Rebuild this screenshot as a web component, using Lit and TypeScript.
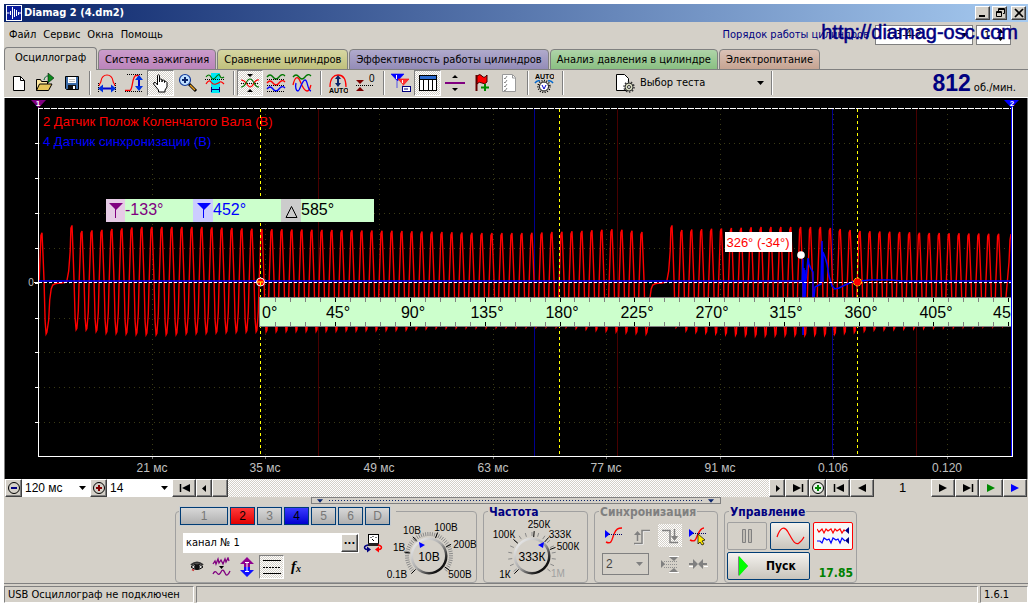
import { LitElement, html, svg, css } from "lit";
import { customElement, state } from "lit/decorators.js";

type Pt = [number, number];

const lerp = (table: Pt[], x: number): number => {
  if (x <= table[0][0]) return table[0][1];
  for (let i = 1; i < table.length; i++) {
    const [x1, y1] = table[i];
    const [x0, y0] = table[i - 1];
    if (x <= x1) return y0 + ((y1 - y0) * (x - x0)) / (x1 - x0);
  }
  return table[table.length - 1][1];
};

/* Envelope of the crankshaft signal: crest and trough height along the time axis. */
const CREST: Pt[] = [[41, 233], [71, 225], [81, 231], [100, 230], [140, 227], [200, 227], [260, 229], [400, 231], [480, 233], [530, 233], [580, 231], [615, 229], [642, 232], [671, 225], [681, 230], [760, 227], [820, 227], [860, 231], [930, 233], [1012, 234]];
const TROUGH: Pt[] = [[41, 334], [76, 329], [100, 333], [150, 335], [240, 332], [330, 331], [400, 330], [430, 328], [560, 327], [600, 331], [642, 334], [671, 327], [685, 332], [745, 336], [825, 335], [870, 330], [930, 328], [1012, 326]];
const ZERO = 282;
const TOOTH: Pt[] = [[-3.4, -0.6], [-2.6, 0], [-1.5, 0.55], [-0.8, 0.95], [0.3, 1], [1.2, 0.6], [2.4, 0], [3.4, -0.75], [4.4, -1], [5.2, -0.97]];

const crankPath = (): string => {
  const pts: string[] = [];
  const tooth = (p: number, skip = 0) => {
    for (const [dx, k] of TOOTH.slice(skip)) {
      const y = k >= 0 ? ZERO - k * (ZERO - lerp(CREST, p)) : ZERO - k * (lerp(TROUGH, p) - ZERO);
      pts.push(`${(p + dx).toFixed(1)},${y.toFixed(1)}`);
    }
  };
  const rest = (p: number) =>
    [[7, 320], [8, 300], [9.5, 289], [11, 285], [14, 283.5], [20, 283], [25, 282], [27, 271]].forEach(([dx, y]) => pts.push(`${p + dx},${y}`));
  tooth(41.7, 1);
  rest(41.7);
  for (let i = 0; i < 58; i++) tooth(71.7 + i * 10, i === 0 ? 2 : 0);
  rest(641.7);
  for (let i = 0; i < 34; i++) tooth(671.7 + i * 9.9, i === 0 ? 2 : 0);
  pts.push("1009,262", "1010,240", "1011,234");
  return pts.join(" ");
};

const SYNC_PATH =
  "39,281 802,281 803,259 803,335 804,268 804,298 805,270 805,298 806,276 806,280 808,258 809,264 811,269 813,272 813,298 814,298 815,287 819,285 821,284 822,241 823,282 823,252 825,257 827,264 829,276 832,286 835,289 839,288 845,285 852,282 860,281 870,280 890,280 902,281 1011,281";

const TIMES: [number, string][] = [[152, "21 мс"], [265, "35 мс"], [379, "49 мс"], [493, "63 мс"], [606, "77 мс"], [720, "91 мс"], [833, "0.106"], [947, "0.120"]];

const ic = (body: unknown, w = 20, h = 20) =>
  html`<svg class="ic" width=${w} height=${h} viewBox="0 0 ${w} ${h}" fill="none" stroke="none" aria-hidden="true">${body}</svg>`;

const icons = {
  logo: ic(svg`<rect width="16" height="16" fill="#fff"/><rect x="1" y="1" width="14" height="14" fill="#0a1c9c"/><path d="M1 8h2.500M4.500 6v4M6.500 2v12M8.500 4v8M10.500 5v6M12.500 7v3M13 8h2" stroke="#fff"/>`, 16, 16),
  file: ic(svg`<path d="M4.500 3.500h7l4 4v10h-11z" fill="#fff" stroke="#000"/><path d="M11.500 3.500v4h4" stroke="#000"/>`),
  open: ic(svg`<path d="M1.500 17.500v-11h4l1 2h6v3" fill="#ffe9a0" stroke="#000"/><path d="M1.500 17.500l3-6.500h12.500l-3.500 6.500z" fill="#e6c65a" stroke="#000"/><path d="M9 7c1-4 3-4 4-4" stroke="#063"/><path d="M13 0l6 5-6 5z" fill="#0a8a1c" stroke="#000" stroke-width=".5"/>`),
  save: ic(svg`<path d="M4.500 3.500h13v13h-12l-1-1z" fill="#3c6ca8" stroke="#000"/><path d="M7 4h8v6H7z" fill="#fff"/><path d="M7 12h8v4H7z" fill="#111"/><path d="M12 13h2v3h-2z" fill="#fff"/><path d="M8 6.500h6M8 8.500h6" stroke="#bbb"/>`),
  width: ic(svg`<path d="M2 13C2 11 4 10 4 8Q5 2 10 2t6 6c0 2 2 3 2 5" stroke="red" stroke-width="1.200"/><path d="M1.500 10v9M18.500 10v9" stroke="#000" stroke-dasharray="1 1"/><path d="M4 15.500h12" stroke="#00c" stroke-width="2"/><path d="M1 15.500l5-4v8zM19 15.500l-5-4v8z" fill="#0030e0"/>`),
  height: ic(svg`<path d="M1 17.500h5C9 16 8 3 12 2.500h3" stroke="red" stroke-width="1.300"/><path d="M3 1.500h16M1 18.500h18" stroke="#000" stroke-dasharray="1 1"/><path d="M15 5v11" stroke="#00c" stroke-width="2"/><path d="M15 2l4 5h-8zM15 18l4-5h-8z" fill="#0030e0"/>`),
  hand: ic(svg`<path d="M6.500 12V2.500q1-1.500 2 0V9V6.500q1-1 2.500 0V9V7.500q1-1 2.500 0V9.500V8.500q1.500-1 2.500 1V14l-2 3v2H7.500v-2L2.500 11q0-2 2-1.500z" fill="#fff" stroke="#000"/>`),
  zoom: ic(svg`<path d="M11 11l7 7" stroke="#000" stroke-width="3"/><path d="M12 12l5 5" stroke="#e8a020" stroke-width="1.500"/><circle cx="7" cy="7" r="5.500" fill="#bfe0ff" stroke="#123a9a" stroke-width="1.200"/><path d="M4 7h6M7 4v6" stroke="#0a246a" stroke-width="2"/>`),
  region: ic(svg`<path d="M6 0h9v20H6z" fill="#00e8f4"/><path d="M1 4q3-4 5 0t5 0 4-1 4 1" stroke="#070" stroke-width="1.200"/><path d="M0 6.500h20" stroke="#000" stroke-dasharray="1 1"/><path d="M1 11q3-5 5-2t5 2 4-2 4 2" stroke="red" stroke-width="1.200"/><path d="M6.500 14v5M14.500 14v5M7 16.500h8" stroke="#000080"/>`),
  overlay: ic(svg`<path d="M1 10.500h18" stroke="#000" stroke-dasharray="1 1"/><path d="M1 7q3 0 5 3t4 4q2 0 4-4t5-3" stroke="red" stroke-width="1.200"/><path d="M1 14q3 0 5-4t4-4q2 0 4 4t5 4" stroke="#070" stroke-width="1.200"/><path d="M7 1h6l-3 3zM7 19h6l-3-3z" fill="#000"/>`),
  stack: ic(svg`<path d="M1 4q3-4 6 0t6 0 6-1" stroke="#070" stroke-width="1.300"/><path d="M1 10q3-4 6 0t6 0 6-1" stroke="red" stroke-width="1.300"/><path d="M1 16q3-4 6 0t6 0 6-1" stroke="#00f" stroke-width="1.300"/><path d="M1 6.500h18M1 12.500h18M1 18.500h18" stroke="#000" stroke-dasharray="1 1"/>`),
  merge: ic(svg`<path d="M1 4q3-4 6 0t6 0 6-1" stroke="#070" stroke-width="1.300"/><path d="M1 12C3 3 6 3 8 8s4 10 7 10 3-4 4-6" stroke="red" stroke-width="1.300"/><path d="M4 10c-1 4 0 8 2 8s4-11 7-11 2 10 6 11" stroke="#00f" stroke-width="1.300"/>`),
  auto: ic(svg`<path d="M2 14C2 5 6 2 10 2s8 3 8 12" stroke="red" stroke-width="1.300"/><path d="M10 4v8" stroke="#0a246a" stroke-width="2"/><path d="M10 2l3 4H7zM10 14l3-4H7z" fill="#0a246a"/><text x="1" y="20" font-size="7" font-weight="700" fill="#000" class="tiny">AUTO</text>`),
  zero: ic(svg`<path d="M1 12.500h18" stroke="#000" stroke-dasharray="1 1"/><path d="M1 7h8l-4 4zM1 18h8l-4-4z" fill="#800000"/><text x="14" y="9" font-size="10" fill="#000" class="tiny">0</text>`),
  markers: ic(svg`<path d="M0 1h13L6.500 8zM6 8v7" fill="#00f" stroke="#00f" stroke-width=".6"/><path d="M7 6h11l-5.500 6zM12 12v6" fill="#f33" stroke="red" stroke-width=".6"/><path d="M5.500 2v4" stroke="#fff"/><path d="M11.500 7v3" stroke="#fff"/><rect x="11.500" y="13.500" width="8" height="5" fill="#fff" stroke="#000080"/><path d="M13 16h4" stroke="#000080"/>`),
  table: ic(svg`<rect x="1.500" y="2.500" width="17" height="15" fill="#fff" stroke="#000"/><path d="M2 3h16v3H2z" fill="#2a6ad0"/><path d="M2 6.500h16M5.500 6v11M10.500 6v11M14.500 6v11" stroke="#000"/>`),
  split: ic(svg`<path d="M0 10h20" stroke="#800080" stroke-width="2"/><path d="M7 5h6l-3-3zM7 15h6l-3 3z" fill="#000"/>`),
  flag: ic(svg`<path d="M4.500 2v16" stroke="#600" stroke-width="2"/><path d="M5 3q3-3 5 0t5-1v7q-2 3-5 1t-5 1z" fill="red" stroke="#400"/><path d="M13 11v7M9 14.500h8" stroke="#080" stroke-width="2"/>`),
  list: ic(svg`<path d="M3.500 1.500h10l3 3v14h-13z" fill="#fff" stroke="#999"/><path d="M5 5l1 1 2-3M5 9l1 1 2-3M5 13l1 1 2-3M5 17l1 1 2-3" stroke="#888"/><path d="M13.500 2v3h3" stroke="#999"/>`),
  autoDial: ic(svg`<text x="1" y="6" font-size="7" font-weight="700" fill="#000" class="tiny">AUTO</text><path d="M1 10q2-3 5-2M19 10q-2-3-5-2" stroke="#06c" stroke-width="1.500"/><circle cx="10" cy="13.500" r="6" stroke="#000" stroke-dasharray="1 1.500" stroke-width="1.500"/><circle cx="10" cy="13.500" r="4.500" fill="#fff" stroke="#000"/><path d="M8 12l2 4 2-4" stroke="#00c"/>`),
  test: ic(svg`<path d="M1.500 1.500h8l4 4v12h-12z" fill="#fff" stroke="#000"/><circle cx="14" cy="14" r="4" fill="#d8dcc0" stroke="#333"/><circle cx="14" cy="14" r="5" stroke="#333" stroke-width="1.500" stroke-dasharray="1.500 1.600"/><circle cx="14" cy="14" r="1.500" fill="#fff" stroke="#333"/>`),
  probe: ic(svg`<rect x="5.500" y="1.500" width="10" height="9" fill="#fff" stroke="#000"/><path d="M8 4v1M10 3v1M13 4v1M9 6l2 2" stroke="#000"/><path d="M5 10h11v3H5z" fill="#222"/><path d="M5 12c-5 1-4 4-1 4.500" stroke="#000080" stroke-width="1.400"/><path d="M15 12c5 1 4 4 1 4.500" stroke="red" stroke-width="1.400"/><path d="M4 13.500l4 3-4 3z" fill="#000080"/><path d="M16 13.500l-4 3 4 3z" fill="red"/>`),
  eye: ic(svg`<path d="M4 10q6-6 12 0-6 5-12 0z" fill="#ddd" stroke="#000"/><circle cx="10" cy="10" r="2.800" fill="#111"/><path d="M4 8q6-5 12 0" stroke="#333" stroke-width="2"/><path d="M5 12.500l2 1" stroke="#c33" stroke-width="1.500"/>`),
  noise: ic(svg`<path d="M1 7l2-3 1 3 2-5 1 4 2-3 2 4 2-5 1 3 2-4 1 3" stroke="#800080" stroke-width="1.300"/><path d="M7 9h5l-2.500 3z" fill="#000"/><path d="M1 17q2-4 4-1t4-1 4 1 5-2" stroke="#800080" stroke-width="1.300"/>`),
  shift: ic(svg`<path d="M10 0l7 7h-4v3H7V7H3z" fill="#900090"/><path d="M10 20l7-7h-4v-3H7v3H3z" fill="#1010ff"/><path d="M10 5v10M8 5.500h4M8 14.500h4" stroke="#fff"/>`),
  lines: ic(svg`<path d="M1 3.500h18M1 16.500h18" stroke="#000"/><path d="M1 10.500h18" stroke="#000" stroke-dasharray="2 1"/>`),
  fx: ic(svg`<text x="4" y="14" font-size="15" font-weight="700" font-style="italic" fill="#000" class="serif">f</text><text x="9" y="15" font-size="10" font-weight="700" font-style="italic" fill="#000" class="serif">x</text>`),
  trigger: ic(svg`<path d="M2 16c6 3 6-3 8-8s4-6 8-6" stroke="red" stroke-width="1.400"/><path d="M1 4l5 4-5 4z" fill="#00f"/><path d="M5 8.500h14" stroke="#006" stroke-dasharray="1 1"/>`),
  rise: ic(svg`<path d="M2 17.500h8v-13h7" stroke="#fff" transform="translate(1 1)"/><path d="M2 17.500h8v-13h8" stroke="#808080" stroke-width="1.500"/><path d="M5.500 7v8" stroke="#808080" stroke-width="1.500"/><path d="M2 9l3.500-4L9 9z" fill="#808080"/>`),
  fall: ic(svg`<path d="M2 4.500h8v12h8" stroke="#808080" stroke-width="1.500"/><path d="M14.500 3v10" stroke="#808080" stroke-width="1.500"/><path d="M11 10l3.500 5 3.500-5z" fill="#808080"/>`),
  pick: ic(svg`<path d="M2 14c6 3 6-2 8-6s4-6 6-6" stroke="red" stroke-width="1.400"/><path d="M1 3l5 4-5 4z" fill="#00f"/><path d="M5 7.500h14" stroke="#006" stroke-dasharray="1 1"/><path d="M10 8l7 6-3 1 2 3-2 1-2-3-2 2z" fill="#ffe800" stroke="#000" stroke-width=".7"/>`),
  level: ic(svg`<path d="M1 6l4 4-4 4z" fill="#808080"/><path d="M4 7.500h13M4 10.500h13M4 13.500h13" stroke="#909090" stroke-dasharray="1 1"/><path d="M9 3h9l-4 4zM9 18h9l-4-4z" fill="#808080"/><path d="M9 2.500h10M9 18.500h10" stroke="#fff"/>`),
  squeeze: ic(svg`<path d="M1 10h6M19 10h-6" stroke="#808080" stroke-width="2"/><path d="M5 5l5 5-5 5zM15 5l-5 5 5 5z" fill="#808080"/><path d="M1 12.500h4M16 12.500h4" stroke="#fff"/>`),
  pause: ic(svg`<path d="M5.500 3.500h3v13h-3zM11.500 3.500h3v13h-3z" fill="#c0bcb4" stroke="#808080"/>`),
  sine: ic(svg`<path d="M1 11C4 2 8-1 12 6s7 14 11 11 4-5 5-6" stroke="red" stroke-width="1.200"/>`, 29, 20),
  dual: ic(svg`<path d="M0 3l2 3 3-3 2 4 2-4 2 2 3-2 2 4 2-4 2 2 3-2 2 4 2-3 1 1" stroke="red" stroke-width="1.200"/><path d="M0 15h3l2 2 2-5 3 2 2-1 2 4 2-5 3 2 2-1 2 4 2-5 3 3" stroke="#00f" stroke-width="1.200"/><path d="M32 1v7l-4-3.500zM32 11v7l-4-3.500z" fill="#000080"/>`, 32, 20),
  play: ic(svg`<path d="M1 0v20l10-10z" fill="#808080"/><path d="M2 0v20l9-10z" fill="#0f0"/>`, 12, 20),
  minus: ic(svg`<circle cx="8" cy="8" r="5.500" stroke="#000"/><path d="M5 8h6" stroke="#000080" stroke-width="2"/>`, 16, 16),
  plus: ic(svg`<circle cx="8" cy="8" r="5.500" stroke="#000"/><path d="M5 8h6M8 5v6" stroke="#800000" stroke-width="2"/>`, 16, 16),
  plusGreen: ic(svg`<circle cx="8" cy="8" r="5.500" stroke="#000" fill="#e8f0e8"/><path d="M5 8h6M8 5v6" stroke="#080" stroke-width="2"/>`, 16, 16),
  first: ic(svg`<path d="M3.500 2v8" stroke="#000" stroke-width="1.500"/><path d="M13 2v8L5 6z" fill="#000"/>`, 14, 12),
  last: ic(svg`<path d="M12.500 2v8" stroke="#000" stroke-width="1.500"/><path d="M3 2v8l8-4z" fill="#000"/>`, 14, 12),
  back: ic(svg`<path d="M11 2v8L3 6z" fill="#000"/>`, 14, 12),
  fwd: ic(svg`<path d="M3 2v8l8-4z" fill="#000"/>`, 14, 12),
  fwdGreen: ic(svg`<path d="M3 2v8l8-4z" fill="#080"/>`, 14, 12),
  fwdBlue: ic(svg`<path d="M3 2v8l8-4z" fill="#00f"/>`, 14, 12),
  sbLeft: ic(svg`<path d="M5 1v7L1 4.500z" fill="#000"/>`, 7, 9),
  sbRight: ic(svg`<path d="M2 1v7l4-3.500z" fill="#000"/>`, 7, 9),
  min: ic(svg`<path d="M2 8h6" stroke="#000" stroke-width="2"/>`, 12, 10),
  restore: ic(svg`<path d="M4.500 3V.5h6v5H9M4 1.500h7M2.500 3.500h5v5h-5zM2 4.500h6" stroke="#000"/>`, 12, 10),
  close: ic(svg`<path d="M2 1l8 8M10 1L2 9" stroke="#000" stroke-width="1.700"/>`, 12, 10),
};

const caret = html`<svg class="caret" width="7" height="4" viewBox="0 0 7 4" aria-hidden="true"><path d="M0 0h7L3.500 4z" fill="currentColor"/></svg>`;
const updown = html`<svg class="caret" width="7" height="14" viewBox="0 0 7 14" aria-hidden="true"><path d="M0 5h7L3.500 1zM0 9h7l-3.500 4z" fill="currentColor"/></svg>`;

const combo = (cls: string, label: string, options: string[]) =>
  html`<span class="combo ${cls}"><select aria-label=${label}>${options.map((o) => html`<option>${o}</option>`)}</select>${caret}</span>`;

@customElement("scope-chart")
export class ScopeChart extends LitElement {
  static styles = css`
    :host { display: block; background: #000; }
    .plot { display: block; width: 100%; font-family: "Liberation Sans", Arial, sans-serif; }
    .crisp { shape-rendering: crispEdges; }
    .grid { stroke: #3a3a14; stroke-dasharray: 1 4; }
    .name { font-size: 13px; }
    .time { font-size: 12px; fill: #c0c0c0; text-anchor: middle; }
    .zero { font-size: 10px; }
    .deg { font-size: 16px; fill: #000; }
    .first { fill: #800080; }
    .second { fill: #00f; }
    .mid { text-anchor: middle; }
    .tip { font-size: 13px; fill: #f00; text-anchor: middle; }
    .tag { font-size: 8px; font-weight: 700; fill: #fff; text-anchor: middle; }
  `;

  render() {
    const rows = Array.from({ length: 9 }, (_, i) => Math.round(143 + i * 34.9));
    const step = 14.95;
    const ticks = Array.from({ length: 50 }, (_, i) => i + 1);
    return html`<svg class="plot" viewBox="5 98 1022 381" role="img" aria-label="Осциллограмма">
      <g class="crisp" fill="none">
        ${rows.map((y) => svg`<path class="grid" d="M39 ${y}.500H1011"/>`)}
        ${TIMES.map(([x]) => svg`<path class="grid" d="M${x}.500 109V456"/>`)}
        ${[318, 617, 916].map((x) => svg`<path d="M${x}.500 109V456" stroke="#480000"/>`)}
        ${[534, 832].map((x) => svg`<path d="M${x}.500 109V456" stroke="#000090"/>`)}
        <path d="M38 282.500h-4M38 108.500H1012" stroke="#fff" />
        <path d="M43 108.500H1012" stroke="#000" stroke-dasharray="1 6" />
      </g>
      <text class="name" x="43" y="126" fill="#f00">2 Датчик Полож Коленчатого Вала (В)</text>
      <text class="name" x="43" y="146" fill="#00f">4 Датчик синхронизации (В)</text>
      <polyline points=${crankPath()} fill="none" stroke="#f00" stroke-width="1.400" />
      <polyline points=${SYNC_PATH} fill="none" stroke="#00f" stroke-width="1.500" />
      <g class="crisp" fill="none">
        <path d="M39 282.500H1011" stroke="#fff" stroke-dasharray="3 2" />
        ${[260, 559, 857].map((x) => svg`<path d="M${x}.500 109V456" stroke="#ff0" stroke-dasharray="3 3"/>`)}
        <path d="M38.500 100V457M38 456.500H1013M1012.500 100V456" stroke="#fff" />
        <path d="M1011.500 100V456" stroke="#00f" />
        ${rows.map((y) => svg`<path d="M35 ${y}.500h3" stroke="#fff"/>`)}
        ${TIMES.map(([x]) => svg`<path d="M${x}.500 457v2" stroke="#777"/>`)}
      </g>
      <circle cx="260.500" cy="282" r="4" fill="#f00" stroke="#fff" />
      <path d="M257 282h6M260.500 282v4" stroke="#ff0" />
      <circle cx="857.500" cy="282" r="4" fill="#f00" stroke="#ff0" stroke-dasharray="2 1" />
      <path d="M31 100h15l-7.500 8z" fill="#800080" />
      <path d="M1004 100h15l-7.500 8z" fill="#00f" />
      <text class="tag" x="38" y="106">1</text>
      <text class="tag" x="1012" y="106">2</text>
      <text class="time zero" x="31" y="286">0</text>
      ${TIMES.map(([x, t]) => svg`<text class="time" x=${x} y="472">${t}</text>`)}

      <g class="crisp">
        <rect x="106" y="199" width="268" height="23" fill="#cfc" />
        <rect x="106" y="199" width="19" height="23" fill="#e6cce6" />
        <rect x="193" y="199" width="20" height="23" fill="#ccf" />
        <rect x="281" y="199" width="20" height="23" fill="#ccc" />
      </g>
      <path d="M109 203h14l-7 7zM115 209h1v9h-1z" fill="#800080" />
      <path d="M197 203h14l-7 7zM203 209h1v9h-1z" fill="#00f" />
      <path d="M286 217.500h11l-5.500-11z" fill="none" stroke="#000" />
      <text class="deg first" x="125" y="215">-133°</text>
      <text class="deg second" x="213" y="215">452°</text>
      <text class="deg" x="301" y="215">585°</text>

      <g class="crisp">
        <rect x="259" y="297" width="752" height="30" fill="#808080" />
        <rect x="260" y="298" width="751" height="28" fill="#cfc" />
        ${ticks.map((i) => {
          const x = Math.round(260.5 + i * step);
          return svg`<path d="M${x}.500 298v4M${x}.500 322v4" stroke=${i % 5 ? "#808080" : "#000"}/>`;
        })}
      </g>
      <text class="deg" x="262" y="318">0°</text>
      ${Array.from({ length: 9 }, (_, i) => i + 1).map(
        (i) => svg`<text class="deg mid" x=${Math.round(263 + i * 5 * step)} y="318">${i * 45}°</text>`
      )}
      <text class="deg" x="993" y="318">45</text>

      <rect class="crisp" x="725" y="232" width="67" height="20" fill="#fff" />
      <text class="tip" x="758" y="247">326° (-34°)</text>
      <circle cx="801" cy="255" r="3.800" fill="#fff" />
    </svg>`;
  }
}

@customElement("range-dial")
export class RangeDial extends LitElement {
  static properties = { kind: {} };
  kind = "volt";

  static styles = css`
    :host { display: block; }
    .dial { display: block; font-family: "Liberation Sans", Arial, sans-serif; }
    .lab { font-size: 10px; fill: #000; text-anchor: middle; }
    .off { fill: #a0a0a0; }
    .val { font-size: 12px; fill: #000; text-anchor: middle; }
  `;

  render() {
    const volt = this.kind === "volt";
    const cx = volt ? 42 : 48;
    const cy = 41;
    const labels: [number, number, string][] = volt
      ? [[10, 63, "0.1В"], [12, 36, "1В"], [25, 19, "10В"], [59, 16, "100В"], [78, 33, "200В"], [73, 63, "500В"]]
      : [[21, 63, "1К"], [20, 23, "100К"], [55, 13, "250К"], [76, 23, "333К"], [84, 35, "500К"], [74, 62, "1М"]];
    const major = volt ? [-135, -81, -40, 20, 62, 125] : [-135, -48, 5, 42, 70];
    const count = volt ? 45 : 16;
    const ray = (deg: number, r0: number, r1: number, color: string) => {
      const a = (deg * Math.PI) / 180;
      const s = Math.sin(a);
      const c = Math.cos(a);
      return svg`<path d="M${(cx + r0 * s).toFixed(1)} ${(cy - r0 * c).toFixed(1)}L${(cx + r1 * s).toFixed(1)} ${(cy - r1 * c).toFixed(1)}" stroke=${color}/>`;
    };
    return html`<svg class="dial" width="97" height="68" viewBox="0 0 97 68" role="img" aria-label=${volt ? "10В" : "333К"}>
      <defs><linearGradient id="rim" x1="0" y1="0" x2="1" y2="1">
        <stop offset="0" stop-color="#fff"/><stop offset=".5" stop-color="#a8a8a8"/><stop offset=".8" stop-color="#111"/>
      </linearGradient></defs>
      ${Array.from({ length: count + 1 }, (_, i) => ray(-130 + (i * 260) / count, 20, 24, "#8a8a8a"))}
      ${major.map((d) => ray(d, 19, 25, "#000"))}
      <circle cx=${cx} cy=${cy} r="18.500" fill="url(#rim)"/>
      <circle cx=${cx} cy=${cy} r="16" fill="#d4d0c8"/>
      <path d=${volt ? "M32 27l6 3-5 3z" : "M60 27l-1 6-5-3z"} fill="#00f"/>
      ${labels.map(([x, y, t]) => svg`<text class="lab ${t === "1М" ? "off" : ""}" x=${x} y=${y}>${t}</text>`)}
      <text class="val" x=${cx} y="46">${volt ? "10В" : "333К"}</text>
    </svg>`;
  }
}

@customElement("app-root")
export class AppRoot extends LitElement {
  @state() private tab = 0;

  static styles = css`
    :host {
      display: block; box-sizing: border-box; min-height: 100vh; padding: 4px 4px 5px; background: #fff; color: #000;
      font: 11px/14px "DejaVu Sans Condensed", "DejaVu Sans", sans-serif;
      --face: #d4d0c8; --dither: repeating-conic-gradient(#fff 0 25%, #d4d0c8 0 50%) 0 0 / 2px 2px;
    }
    *, *::before { box-sizing: border-box; }
    button, select, input { font: inherit; color: inherit; margin: 0; padding: 0; border: 0; border-radius: 0; background: none; }
    button { display: flex; align-items: center; justify-content: center; }
    .ic { display: block; flex: none; }
    .tiny { font-family: "Liberation Sans", sans-serif; }
    .serif { font-family: "Liberation Serif", serif; }
    .window { background: var(--face); position: relative; }

    .title { display: flex; align-items: center; height: 18px; padding: 0 2px; gap: 2px; background: linear-gradient(90deg, #0a246a, #a6caf0); }
    .title h1 { flex: 1; margin: 0; font-size: 11px; font-weight: 700; color: #fff; }
    .raised { background: var(--face); border: 1px solid; border-color: #fff #404040 #404040 #fff; box-shadow: inset -1px -1px #808080; }
    .sys { width: 15px; height: 14px; }
    .sys.x { margin-left: 2px; }

    .menu { display: flex; align-items: center; height: 26px; padding: 0 17px 0 5px; }
    .menu a { color: #000; text-decoration: none; margin-right: 7px; }
    .order { display: flex; align-items: center; gap: 3px; margin-left: auto; color: #000080; }
    .combo { display: inline-grid; align-items: center; background: #fff; color: #000; }
    .combo select, .combo input { grid-area: 1 / 1; appearance: none; width: 100%; height: 100%; padding-left: 3px; outline: 0; }
    .caret { grid-area: 1 / 1; justify-self: end; margin-right: 4px; pointer-events: none; }
    .cyl { width: 98px; height: 20px; border: 1px solid #808080; margin-left: 3px; }
    .cyl select { padding-left: 10px; }
    .spin { width: 35px; height: 20px; border: 1px solid #808080; }
    .spin input { padding-left: 7px; }
    .spin .caret { margin-right: 6px; }
    .site { position: absolute; right: 10px; top: 17px; font: 20px/22px "Liberation Sans", Arial, sans-serif; color: #000080; text-decoration: none; -webkit-text-stroke: 0.5px #000080; }

    .tabs { display: flex; align-items: flex-end; height: 22px; gap: 1px; background: linear-gradient(#808080, #808080) 0 100% / 100% 1px no-repeat; }
    .tab { height: 21px; padding: 0 6px; border: 1px solid #808080; border-radius: 4px 4px 0 0; white-space: nowrap; }
    .tab.on { height: 23px; padding: 0 10px 3px; border-bottom: 0; background: var(--face); }
    .t1 { background: linear-gradient(#cb9ccb, #bb84bb); }
    .t2 { background: linear-gradient(#d6d6a2, #c0c07c); }
    .t3 { background: linear-gradient(#b0aacc, #948cb8); }
    .t4 { background: linear-gradient(#aed4a8, #8abf82); }
    .t5 { background: linear-gradient(#dac2b6, #c6a492); }

    .tools { display: flex; align-items: center; height: 28px; padding: 0 12px 2px 2px; border-bottom: 1px solid #fff; }
    .tool { width: 26px; height: 26px; }
    .wide .tool { width: 27px; }
    .set { display: flex; }
    .pressed { background: var(--dither); border: 1px solid; border-color: #808080 #fff #fff #808080; }
    .sep { flex: none; width: 2px; height: 24px; margin: 0 2px 0 5px; border-left: 1px solid #808080; border-right: 1px solid #fff; }
    .test { display: flex; align-items: center; gap: 2px; margin-left: 49px; }
    .test .combo { width: 127px; height: 22px; background: none; }
    .test .caret { margin-right: 0; }
    .rpm { margin-left: auto; display: flex; align-items: baseline; gap: 3px; }
    .rpm b { font: 700 23px/24px "Liberation Sans", Arial, sans-serif; color: #000080; }

    .screen { border-left: 1px solid #808080; border-right: 1px solid #808080; }

    .nav { display: flex; height: 18px; padding: 0 1px; }
    .sq { width: 17px; } .arrow { width: 24px; } .sb { width: 16px; }
    .span { width: 68px; } .frame { width: 65px; }
    .nav .combo { font: 12px/16px "Liberation Sans", Arial, sans-serif; }
    .track { flex: 1; background: var(--dither); }
    .page { width: 57px; text-align: center; font: 13px/18px "Liberation Sans", Arial, sans-serif; }
    .splitter { display: flex; align-items: center; gap: 6px; width: 40%; height: 7px; margin: 0 auto; padding: 0 6px 0 5px; border: 1px solid #808080; color: #0a246a; }
    .splitter .caret { margin: 0; width: 6px; }
    .dots { flex: 1; height: 1px; background: repeating-linear-gradient(90deg, #0a246a 0 1px, transparent 1px 3px); }

    .bottom { display: flex; align-items: flex-start; gap: 6px; height: 80px; padding: 7px 0 0 171px; border-bottom: 1px solid #808080; }
    .group { height: 72px; border: 1px solid #a0a0a0; border-radius: 4px; }
    .group h2 { width: fit-content; margin: -7px 0 0 4px; padding: 0 1px; font-size: 12px; line-height: 14px; font-weight: 700; background: var(--face); color: #000080; }
    .channels { width: 302px; display: grid; grid-template-columns: 211px 1fr; }
    .chan { display: flex; gap: 2px; width: fit-content; margin: -5px 0 0 4px; padding-right: 6px; background: var(--face); }
    .ch { width: 25px; height: 18px; border: 1px solid #003c74; background: linear-gradient(#d8d8d8, #b0b0b0); color: #777; font: 12px/14px "Liberation Sans", Arial, sans-serif; box-shadow: 0 0 0 1px #c8ccd0; }
    .ch.first { width: 48px; }
    .ch.red { background: linear-gradient(#ff3a3a, #e00000); color: #000; }
    .ch.blue { background: linear-gradient(#3a3aff, #0000d0); color: #000; }
    .left { width: 212px; }
    .named { display: flex; align-items: center; gap: 4px; margin: 8px 0 0 7px; }
    .namebox { display: flex; width: 176px; height: 20px; padding: 1px; background: #fff; }
    .namebox input { flex: 1; min-width: 0; padding-left: 2px; outline: 0; }
    .dotbtn { width: 17px; font-weight: 700; line-height: 8px; padding-bottom: 4px; }
    .opts { display: flex; margin: 2px 0 0 8px; }
    .opts .tool { width: 25px; height: 24px; }
    .dialbox { margin-top: 3px; }
    .freq { width: 105px; } .freq range-dial { margin-top: -4px; }
    .sync { width: 124px; }
    .sync h2 { color: #808080; }
    .syncgrid { display: grid; grid-template-columns: repeat(4, 1fr); justify-items: center; align-items: center; margin: 5px 5px 0; row-gap: 5px; }
    .syncgrid .tool { width: 24px; height: 23px; }
    .src { grid-column: span 2; width: 47px; height: 22px; border: 1px solid #808080; background: var(--face); color: #444; justify-self: start; margin-left: 2px; font: 12px/14px "Liberation Sans", Arial, sans-serif; }
    .src .caret { color: #808080; margin-right: 5px; }
    .pressed.flat { border-color: transparent; }
    .control { width: 133px; }
    .ctlgrid { display: grid; grid-template-columns: repeat(3, 40px); gap: 2px 3px; margin: 3px 2px 0; }
    .ctl { height: 28px; border: 1px solid #003c74; border-radius: 2px; background: linear-gradient(#f4f2ee, #c8c4bc); }
    .ctl.off { border-color: #a0a0a0; background: var(--face); }
    .ctl.hot { border: 1px solid #f00; background: #f8f8f8; }
    .start { grid-column: span 2; justify-content: flex-start; padding-left: 9px; gap: 17px; font-size: 12px; font-weight: 700; }
    .volts { align-self: end; justify-self: end; color: #008000; font-size: 12px; font-weight: 700; }

    .status { display: flex; gap: 2px; height: 19px; padding-top: 2px; }
    .cell { border: 1px solid; border-color: #808080 #fff #fff #808080; padding: 1px 0 0 3px; line-height: 14px; white-space: nowrap; }
    .c1 { width: 190px; } .c2 { flex: 1; } .c3 { width: 48px; }
  `;

  private tool(name: keyof typeof icons, label: string, cls = "") {
    return html`<button type="button" class="tool ${cls}" aria-label=${label}>${icons[name]}</button>`;
  }
  private nav(name: keyof typeof icons, label: string, cls: string) {
    return html`<button type="button" class="raised ${cls}" aria-label=${label}>${icons[name]}</button>`;
  }

  render() {
    const tabs = ["Осциллограф", "Система зажигания", "Сравнение цилиндров", "Эффективность работы цилиндров", "Анализ давления в цилиндре", "Электропитание"];
    const channels = ["1", "2", "3", "4", "5", "6", "D"];
    const chCls = ["first", "red", "", "blue", "", "", ""];
    return html`<main class="window">
      <header class="title">
        ${icons.logo}
        <h1>Diamag 2 (4.dm2)</h1>
        <button type="button" class="sys raised" aria-label="Свернуть">${icons.min}</button>
        <button type="button" class="sys raised" aria-label="Восстановить">${icons.restore}</button>
        <button type="button" class="sys x raised" aria-label="Закрыть">${icons.close}</button>
      </header>
      <nav class="menu">
        ${["Файл", "Сервис", "Окна", "Помощь"].map((m) => html`<a href="#">${m}</a>`)}
        <div class="order">
          <label for="order">Порядок работы цилиндров</label>
          <span class="combo cyl"><select id="order"><option>1-3-4-2</option></select>${caret}</span>
          <span class="combo spin"><input aria-label="Цилиндр" value="1" />${updown}</span>
        </div>
      </nav>
      <a class="site" href="http://diamag-osc.com">http://diamag-osc.com</a>
      <div class="tabs" role="tablist">
        ${tabs.map((t, i) => html`<button type="button" role="tab" aria-selected=${i === this.tab} class="tab t${i} ${i === this.tab ? "on" : ""}" @click=${() => (this.tab = i)}>${t}</button>`)}
      </div>
      <div class="tools">
        <div class="set">${this.tool("file", "Новый")}${this.tool("open", "Открыть")}${this.tool("save", "Сохранить")}</div>
        <i class="sep"></i>
        <div class="set wide">${this.tool("width", "По ширине")}${this.tool("height", "По высоте")}${this.tool("hand", "Рука", "pressed")}${this.tool("zoom", "Увеличить")}${this.tool("region", "Область")}</div>
        <i class="sep"></i>
        <div class="set">${this.tool("overlay", "Наложить", "pressed")}${this.tool("stack", "Разнести")}${this.tool("merge", "Совместить")}</div>
        <i class="sep"></i>
        <div class="set wide">${this.tool("auto", "Авто")}${this.tool("zero", "Ноль")}</div>
        <i class="sep"></i>
        <div class="set wide">${this.tool("markers", "Маркеры")}${this.tool("table", "Таблица", "pressed")}${this.tool("split", "Разделить")}${this.tool("flag", "Флаг")}${this.tool("list", "Список")}</div>
        <i class="sep"></i>
        <div class="set">${this.tool("autoDial", "Автодиапазон")}</div>
        <i class="sep"></i>
        <div class="test">${icons.test}${combo("", "Тест", ["Выбор теста"])}<i class="sep"></i></div>
        <div class="rpm"><b>812</b><span>об./мин.</span></div>
      </div>
      <div class="screen"><scope-chart></scope-chart></div>
      <div class="nav">
        ${this.nav("minus", "Сжать", "sq")}${combo("span", "Развёртка", ["120 мс"])}
        ${this.nav("plus", "Растянуть", "sq")}${combo("frame", "Кадр", ["14"])}
        ${this.nav("first", "В начало", "arrow")}${this.nav("sbLeft", "Влево", "sb")}
        <span class="raised sb"></span><div class="track"></div>
        ${this.nav("sbRight", "Вправо", "sb")}${this.nav("last", "В конец", "arrow")}${this.nav("plusGreen", "Добавить", "sq")}
        ${this.nav("first", "Первый", "arrow")}${this.nav("back", "Назад", "arrow")}
        <span class="page">1</span>
        ${this.nav("fwd", "Вперёд", "arrow")}${this.nav("last", "Последний", "arrow")}${this.nav("fwdGreen", "Пуск", "arrow")}${this.nav("fwdBlue", "Пуск", "arrow")}
      </div>
      <div class="splitter">${caret}<span class="dots"></span>${caret}</div>
      <div class="bottom">
        <section class="group channels">
          <div class="left">
            <div class="chan">${channels.map((c, i) => html`<button type="button" class="ch ${chCls[i]}">${c}</button>`)}</div>
            <div class="named">
              <span class="namebox"><input aria-label="Имя канала" value="канал № 1" /><button type="button" class="raised dotbtn">...</button></span>
              ${icons.probe}
            </div>
            <div class="opts">${this.tool("eye", "Видимость")}${this.tool("noise", "Фильтр")}${this.tool("shift", "Смещение")}${this.tool("lines", "Линии", "pressed")}${this.tool("fx", "Функция")}</div>
          </div>
          <range-dial class="dialbox" kind="volt"></range-dial>
        </section>
        <section class="group freq">
          <h2>Частота</h2>
          <range-dial kind="freq"></range-dial>
        </section>
        <section class="group sync">
          <h2>Синхронизация</h2>
          <div class="syncgrid">
            ${this.tool("trigger", "Уровень")}${this.tool("rise", "Фронт")}${this.tool("fall", "Спад", "pressed flat")}${this.tool("pick", "Выбрать")}
            ${combo("src", "Источник", ["2"])}${this.tool("level", "Порог")}${this.tool("squeeze", "Сжать")}
          </div>
        </section>
        <section class="group control">
          <h2>Управление</h2>
          <div class="ctlgrid">
            <button type="button" class="ctl off" aria-label="Пауза">${icons.pause}</button>
            <button type="button" class="ctl" aria-label="Сигнал">${icons.sine}</button>
            <button type="button" class="ctl hot" aria-label="Запись">${icons.dual}</button>
            <button type="button" class="ctl start">${icons.play}Пуск</button>
            <span class="volts">17.85</span>
          </div>
        </section>
      </div>
      <footer class="status">
        <div class="cell c1">USB Осциллограф не подключен</div>
        <div class="cell c2"></div>
        <div class="cell c3">1.6.1</div>
      </footer>
    </main>`;
  }
}
